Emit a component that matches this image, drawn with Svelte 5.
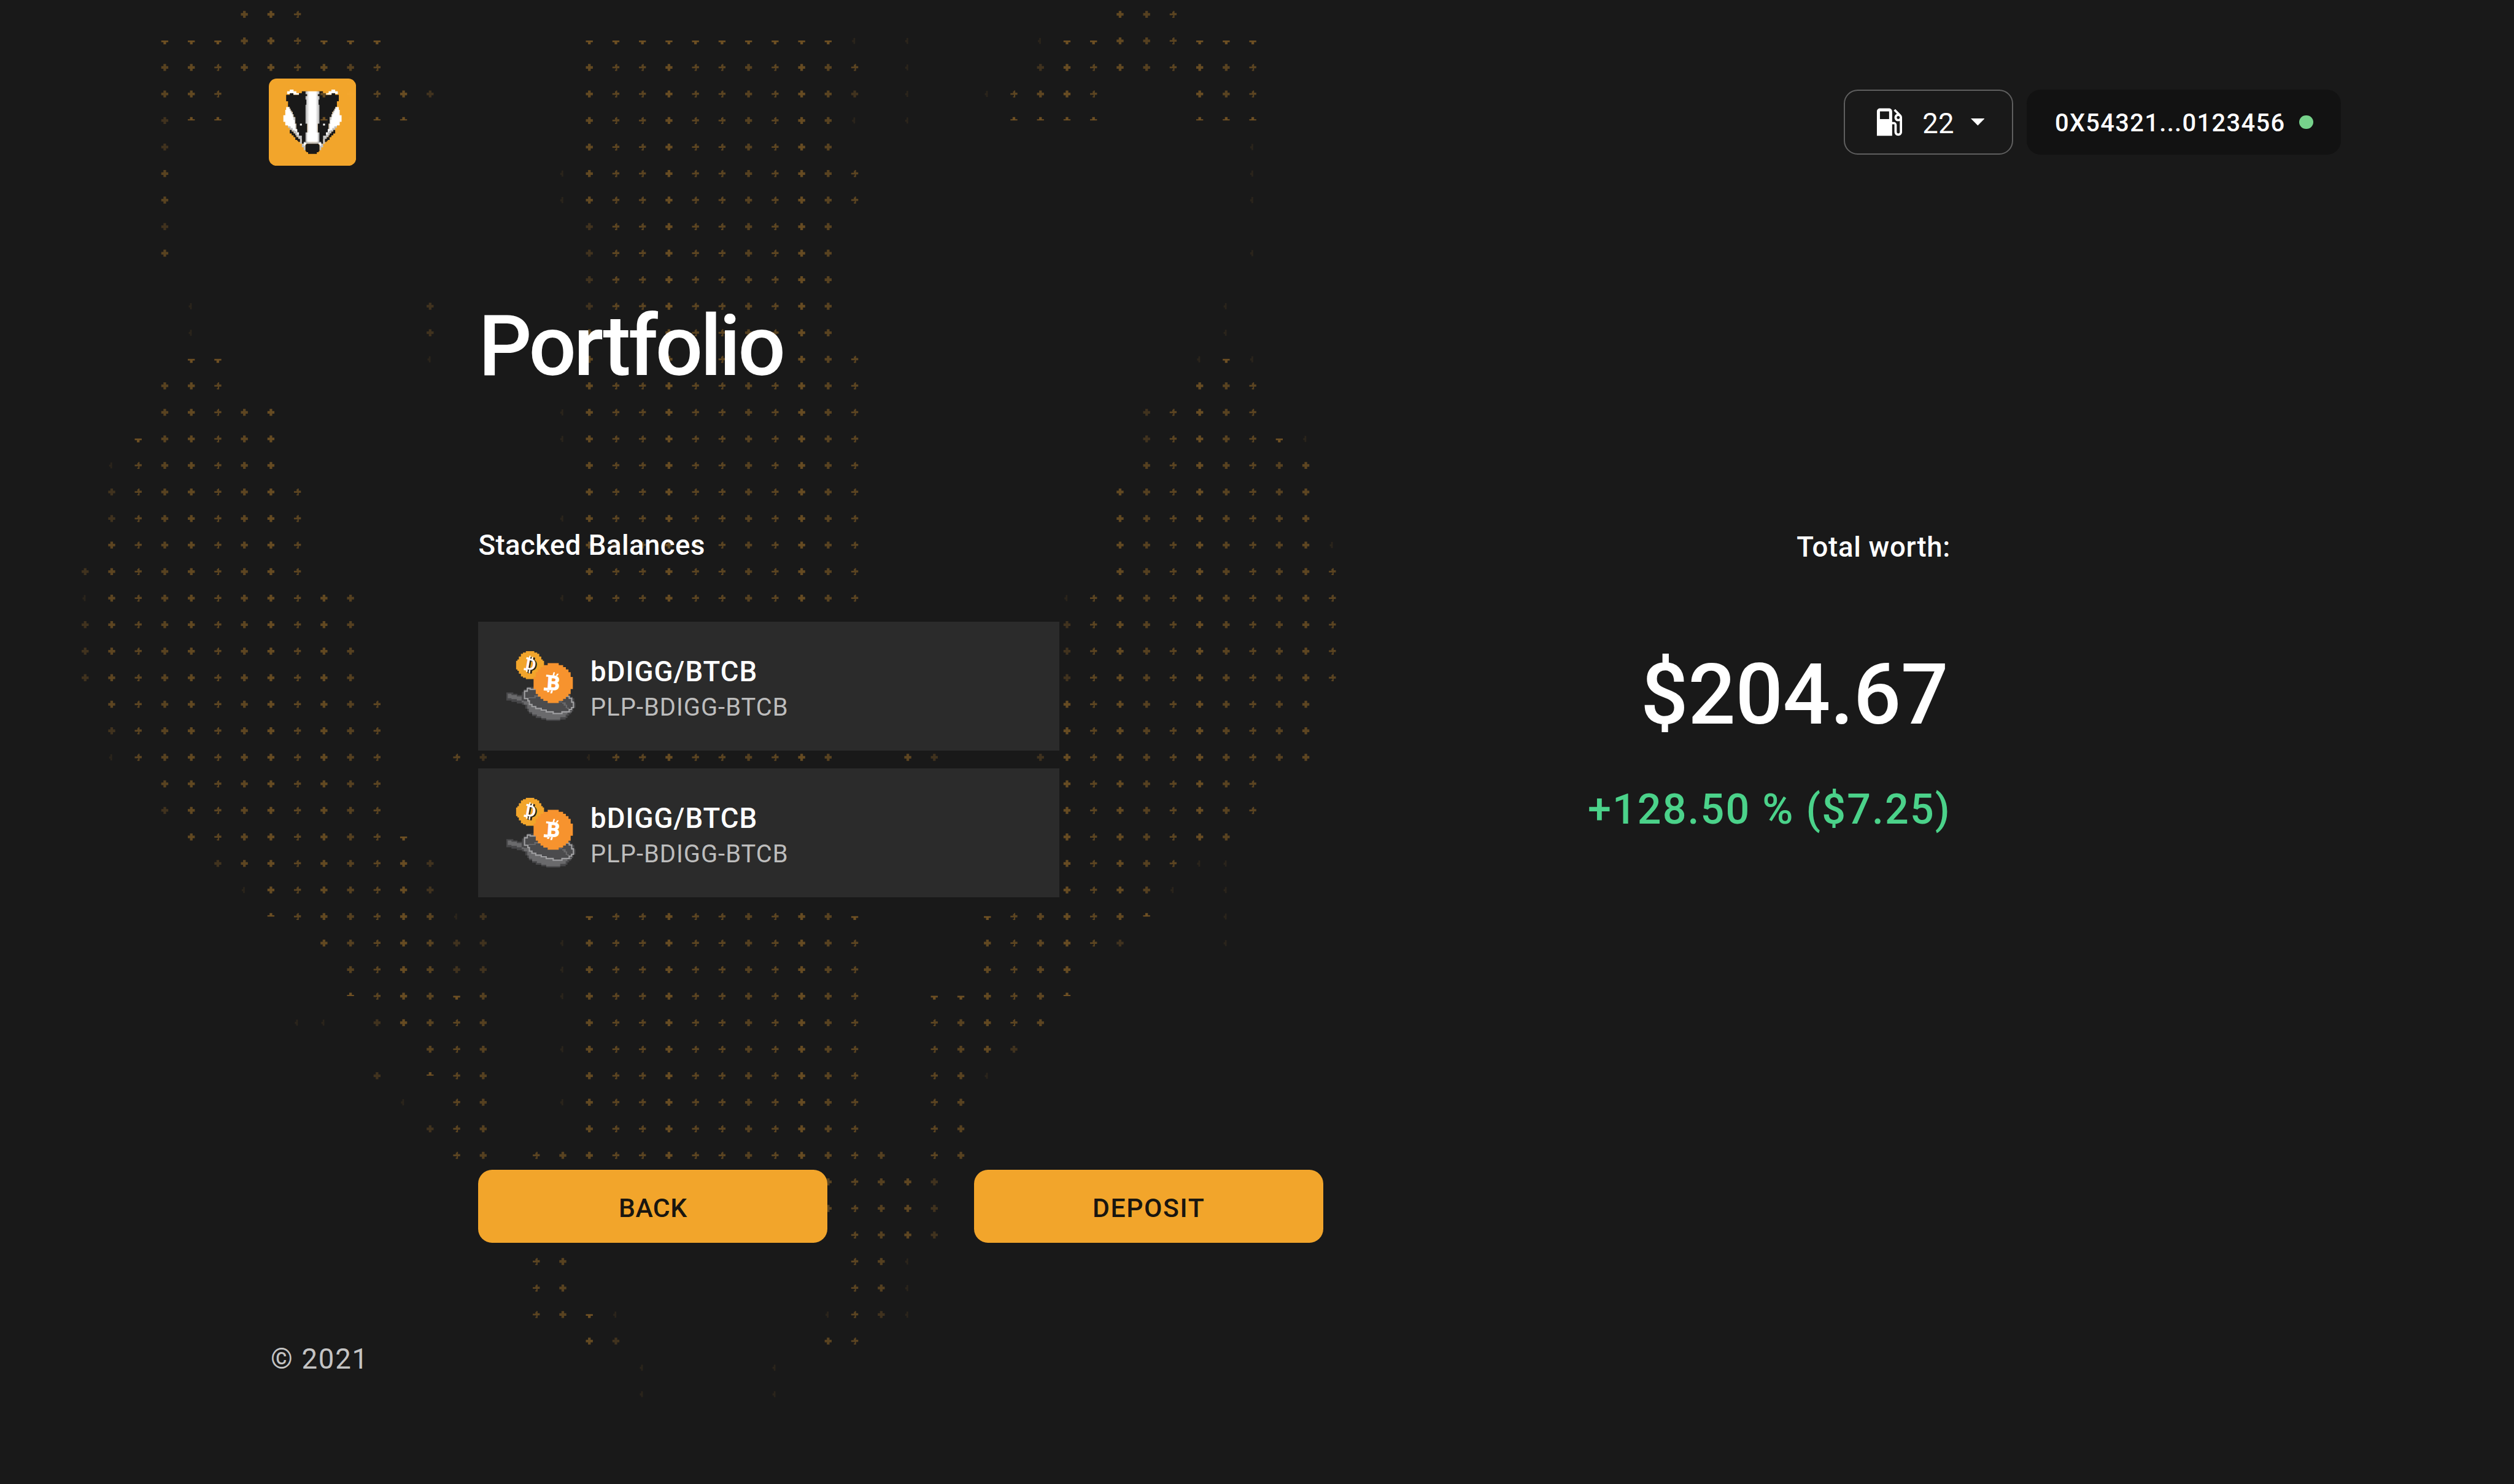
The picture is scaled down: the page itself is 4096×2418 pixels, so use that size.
<script>
  // Dot field: one entry per grid row, "a-b" is a run of columns.
  // Suffixes: d = dim, f = faint, t = lower half only, u = upper half only.
  const rows = [
    '6-8 39-41', '3-5t 6-8 9-11t 19-28t 29f 31f 36f 37-38t 39-41 42-44t', '3-11 19-29 31f 36d 37-44',
    '3-5 9-12 13d 19-28 29d 31f 34f 35-38 42-44', '3d 4-5u 9-12u 19-28 29f 31f 35-38u 42-44u', '3d 19-28 44f',
    '3 18f 19-29 44f', '3 18f 19-29 44f', '3d 19d 20-28', '3 19d 20-28 44f', '19d 20-28', '4f 13d 19d 20-28 43f',
    '4f 13d 19-28 43f', '4-5t 13f 19-29 42f 43t 44f', '3-5 19-29 42-44', '3-7 18f 19-29 40d 41-44',
    '2t 3-7 18f 19-29 40d 41-44 45t 46f', '1f 2-7 19-29 40-46', '1d 2-8 19-29 39-46', '1d 2-8 18f 19-29 39-46',
    '1-8 19-29 39-46 47f', '0d 1-8 19-29 39-47', '0f 1-10 18f 19-29 37f 38-47', '0d 1-10 37d 38-47',
    '0d 1-10 37d 38-47', '0d 1-10 37d 38-47', '1-11 37-46', '1d 2-11 37-46', '1f 2-11 14 15d 19f 20-28 31 32d 36d 37-46',
    '3-11 37-44', '3d 4-11 37-44', '4-11 12t 37-43', '5d 6-12 13d 37-41 42-43f', '6f 7-12 13d 37-40 41f 43f',
    '7u 8-13 14f 15d 19t 20-28 29t 34t 35-39 40u 43f', '9-13 14-15d 18f 19-29 34-38 39d 43f',
    '10-13 14-15d 18f 19-29 34-37', '10u 11-13 14t 15 18f 19-29 32-33t 34-36 37u', '8-9f 11d 12-15 19-29 32-36',
    '13-15 18f 19-29 32-34 35d', '11d 13u 14-15 19-29 32-33 34f', '12f 14-15 18f 19-29 32-33', '13d 14-15 19-29 32-33',
    '14-15 17-30 32-33', '28-31 32d', '28-31 32d', '29-31 32d', '17-18 29-30 31f', '17-18 29-30 31f',
    '17-18 19t 20f 28f 29 30d 31f', '19 20d 28-29', '21f 26f', '21f 26f'
  ];
  const shapes = {
    '': 'M-3-8h6v5h5v6h-5v5h-6v-5h-5v-6h5z',
    n: 'M-2-6h2v-2h3v5h5v5h-5v6h-5v-3h2v-3h-8v-4h6z',
    d: 'M-3-8h6v5h5v6h-5v5h-6v-5h-5v-6h5z',
    f: 'M-3-7h4v14h-4v-4h-3v-5h3z',
    t: 'M-8-1h16v4h-5v5h-6v-5h-5z',
    u: 'M-3-8h6v5h5v3h-16v-3h5z'
  };
  const opacity = { d: 0.18, f: 0.08, t: 0.38, u: 0.38, n: 0.3 };
  const dots = rows.flatMap((row, r) =>
    row.split(' ').flatMap((run) => {
      const [, a, b, kind] = run.match(/(\d+)(?:-(\d+))?([dftu]?)/);
      const out = [];
      for (let c = +a; c <= +(b ?? a); c++) {
        const k = kind || (c % 3 === 2 || c === 21 || c === 24 ? 'n' : '');
        out.push({ x: 195.1 + 60.8 * c, y: 32.9 + 60.8 * r, k, o: opacity[k] ?? 0.27 + ((c * 7 + r * 5) % 5) * 0.02 });
      }
      return out;
    })
  );

  // Disc with stair-stepped edges; steps are [offset from top, half width].
  function disc(cx, top, h, steps) {
    const right = [], left = [];
    steps.forEach(([y, w], i) => {
      if (i) right.push([cx + steps[i - 1][1], top + y]);
      right.push([cx + w, top + y]);
    });
    const lower = right.map(([x, y]) => [x, 2 * top + h - y]).reverse();
    const side = [...right, ...lower];
    for (const [x, y] of [...side].reverse()) left.push([2 * cx - x, y]);
    return [...side, ...left].map((p) => p.join(',')).join(' ');
  }
  const smallCoin = disc(193, 36, 192, [[0, 29], [9, 49], [18, 63], [37, 77], [57, 87], [66, 96]]);
  const bigCoin = disc(352, 118, 274, [[0, 38], [14, 68], [28, 87], [44, 105], [62, 120], [95, 135]]);

  const balances = [
    { pair: 'bDIGG/BTCB', token: 'PLP-BDIGG-BTCB' },
    { pair: 'bDIGG/BTCB', token: 'PLP-BDIGG-BTCB' }
  ];
</script>

<div class="page">
  <header>
    <svg class="logo" viewBox="78 60 600 600">
      <rect x="78" y="60" width="600" height="600" rx="54" fill="#f2a52b" />
      <defs>
        <linearGradient id="stripe">
          <stop offset="0" stop-color="#a9a9a9" /><stop offset=".12" stop-color="#d5d5d5" />
          <stop offset=".28" stop-color="#fff" /><stop offset=".72" stop-color="#fff" />
          <stop offset=".88" stop-color="#d5d5d5" /><stop offset="1" stop-color="#a9a9a9" />
        </linearGradient>
        <g id="half">
          <path fill="#191919" d="M197 172H222V160H247V172H285V160H305V148H342V508H305V478H292V452H273V420H267V370H260V325H248V305H242V288H235V280H228V268H222V255H210V216H197z" />
          <path fill="#fff" d="M204 148H222V136H248V148H267V160H285V171H247V160H222V167H204z" />
          <path fill="#c2c2c2" d="M210 256H222V268H228V280H235V290H242V306H248V325H260V370H267V408H273V430H285V452H305V508H292V482H280V463H267V450H260V438H248V425H235V413H222V400H210V382H197z" />
          <path fill="#fff" d="M197 256H216V268H222V280H228V294H235V306H242V325H248V345H255V372H260V408H273V430H267V420H255V413H242V400H228V388H210V382H191V357H178V312H191V275H197z" />
          <path fill="#fff" d="M273 430H285V445H273z" />
          <path fill="#191919" d="M222 413H235V425H248V438H260V450H267V463H280V475H292V496H280V488H273V482H260V463H248V450H235V438H222z" />
          <path fill="#c2c2c2" d="M305 508H318V496H378V508H330V552H318V533H305z" />
          <path fill="#fff" d="M318 502H336V510H330V521H318zM292 370H305V383H292z" />
        </g>
      </defs>
      <use href="#half" /><use href="#half" transform="translate(756)scale(-1 1)" />
      <path fill="url(#stripe)" d="M330 148H426V168H414V180H426V205H420V240H426V370H414V430H426V496H330V430H342V370H330V240H336V205H330V180H342V168H330z" />
      <path fill="#fff" d="M342 432H414V494H342z" />
      <path fill="#191919" d="M336 508H420V515H426V560H420V566H408V578H348V566H336V560H330V515H336z" />
    </svg>
    <div class="status">
      <button class="gas">
        <svg class="pump" viewBox="0 0 24 24"><path fill="#fff" d="M19.77 7.23l.01-.01-3.72-3.72L15 4.56l2.11 2.11c-.94.36-1.61 1.26-1.61 2.33 0 1.38 1.12 2.5 2.5 2.5.36 0 .69-.08 1-.21v7.21c0 .55-.45 1-1 1s-1-.45-1-1V14c0-1.1-.9-2-2-2h-1V5c0-1.1-.9-2-2-2H6c-1.1 0-2 .9-2 2v16h10v-7.5h1.5v5c0 1.38 1.12 2.5 2.5 2.5s2.5-1.12 2.5-2.5V9c0-.69-.28-1.32-.73-1.77zM12 10H6V5h6v5zm6 0c-.55 0-1-.45-1-1s.45-1 1-1 1 .45 1 1-.45 1-1 1z" /></svg>
        <span>22</span>
        <svg class="caret" viewBox="0 0 32 16"><path fill="#fff" d="M0 0h32L16 16z" /></svg>
      </button>
      <button class="wallet"><span>0X54321...0123456</span><i></i></button>
    </div>
  </header>

  <svg class="dots" viewBox="0 0 5760 3400">
    {#each dots as d}
      <path d={shapes[d.k]} transform="translate({d.x} {d.y})" fill="#f6a935" fill-opacity={d.o} />
    {/each}
  </svg>

  <main>
    <h1>Portfolio</h1>
    <div class="columns">
      <section class="balances">
        <h2>Stacked Balances</h2>
        <div class="cards">
          {#each balances as b}
            <article>
              <svg class="coins" viewBox="30 36 480 480">
                <path fill="#474749" d="M30 320H78V329H106V338H137V315H150V298H174V282H230V340H458V325H470V350H487V360H497V388H505V425H490V450H475V468H462V480H450V496H438V506H400V515H304V506H270V496H232V482H207V465H185V450H174V432H160V404H137V396H102V385H65V376H30z" />
                <path fill="#6a6a6c" d="M40 329H65V338H102V347H135V376H150V380H185V404H207V420H232V432H270V446H304V458H352V470H412V458H462V445H480V458H450V472H438V490H400V506H304V496H270V484H240V472H207V455H185V432H174V404H150V388H135V376H102V366H65V360H40z" />
                <path fill="#4b4b4d" d="M160 310H180V300H460V355H475V390H487V425H462V448H412V452H300V436H270V424H232V410H207V395H190V375H160z" />
                <path fill="#68686a" d="M184 352H222V340H264V350H232V360H184zM390 380H414V388H438V404H448V424H460V434H448V428H438V410H424V398H414V388H390z" />
                <path fill="none" stroke="#a0a0a2" stroke-width="9" d="M232 298H194V292H174V311H155V362H178V378H188V402H206V417H232V430H270V441H304V453H352V465H412V453H462V437H478V424H491V387H479V360H462V347H438" />
                <polygon points={smallCoin} fill="#f2a52b" />
                <g class="letter d" transform="translate(198 129)rotate(10)">
                  <g fill="#191919" stroke="#191919" stroke-width="3" transform="translate(9 3)"><text y="36">D</text><path d="M-18-54h8v14h-8zM2-54h8v14h-8zM-20 38h8v18h-8zM-2 38h8v18h-8z" /></g>
                  <text y="36">D</text><path d="M-20-60h9v22h-9zM-2-54h9v16h-9zM-24 36h9v18h-9zM-6 36h9v22h-9zM-38-46h20v14h-20zM-42 30h22v15h-22z" />
                </g>
                <polygon points={bigCoin} fill="#f7932e" />
                <g class="letter b" transform="translate(354 255)rotate(4)">
                  <text y="48" stroke="#fff" stroke-width="4">B</text><path d="M-5-74h10l-4 22h-11zM20-66h12l-9 16h-11zM-36 52h14l-5 14h-14zM-14 52h14l-5 20h-12zM-54-54h24v14h-24zM-64 36h28v20h-28z" />
                </g>
              </svg>
              <div class="names"><strong>{b.pair}</strong><span>{b.token}</span></div>
            </article>
          {/each}
        </div>
      </section>
      <section class="worth">
        <p class="label">Total worth:</p>
        <p class="total">$204.67</p>
        <p class="change">+128.50 % ($7.25)</p>
      </section>
    </div>
    <div class="actions"><button class="back">BACK</button><button class="deposit">DEPOSIT</button></div>
  </main>
  <footer>© 2021</footer>
</div>

<style>
  /* 1rem is one hundred units of the 5760-unit wide canvas */
  :global(html) { font-size: calc(100vw / 57.6); }
  :global(body) { margin: 0; background: #191919; }
  .page { position: relative; box-sizing: border-box; height: 34rem; overflow: hidden; background: #191919; color: #fff; font-family: Roboto, sans-serif; font-weight: 500; }
  header { display: flex; align-items: center; justify-content: space-between; padding: 1.8rem 3.96rem 0 6.16rem; }
  .logo { width: 2rem; height: 2rem; display: block; }
  .dots { position: absolute; inset: 0; width: 100%; height: 34rem; pointer-events: none; }
  .status { display: flex; gap: .32rem; }
  button { box-sizing: border-box; border: 0; border-radius: .32rem; font-family: inherit; font-weight: 500; color: #fff; padding: 0; }
  .gas { display: flex; align-items: center; width: 3.88rem; height: 1.48rem; border: .04rem solid #5f5f5f; background: #191919; padding-left: .6rem; font-size: .64rem; font-weight: 400; }
  .pump { width: .84rem; height: .84rem; margin-right: .32rem; }
  .gas span { line-height: .64rem; width: .76rem; padding-top: .08rem; }
  .caret { width: .32rem; height: .16rem; margin-left: .36rem; }
  .wallet { display: flex; align-items: center; justify-content: space-between; width: 7.2rem; height: 1.48rem; background: #121212; padding: 0 .64rem; font-size: .56rem; line-height: .56rem; letter-spacing: .019rem; }
  .wallet span { padding-top: .06rem; }
  .wallet i { width: .32rem; height: .32rem; border-radius: 50%; background: #76d28b; }
  main { position: relative; padding: 3.18rem 12.96rem 0 10.96rem; }
  h1, h2, p { margin: 0; font-weight: 500; }
  h1 { font-size: 1.92rem; line-height: 1.92rem; letter-spacing: -.058rem; }
  .columns { display: flex; justify-content: space-between; margin-top: 3.28rem; }
  .balances { width: 13.31rem; }
  h2 { font-size: .64rem; line-height: .64rem; letter-spacing: .0067rem; }
  .cards { display: grid; gap: .4rem; margin-top: 1.42rem; }
  article { box-sizing: border-box; height: 2.96rem; display: flex; align-items: center; gap: .33rem; padding-left: .64rem; background: #2b2b2b; }
  .coins { width: 1.6rem; height: 1.6rem; }
  .letter { fill: #fff; font-family: Roboto, sans-serif; font-weight: 700; text-anchor: middle; }
  .d { font-size: 108px; }
  .b { font-size: 138px; }
  .names { display: grid; padding-top: .17rem; }
  .names strong { font-size: .64rem; line-height: .83rem; font-weight: 500; letter-spacing: .015rem; }
  .names span { font-size: .56rem; line-height: .82rem; font-weight: 400; letter-spacing: .0146rem; color: #bdbdbd; }
  .worth { text-align: right; padding-top: .04rem; }
  .label { font-size: .64rem; line-height: .64rem; letter-spacing: .01rem; margin-right: -.05rem; }
  .total { font-size: 1.92rem; line-height: 1.92rem; margin-top: 2.1rem; letter-spacing: -.004rem; }
  .change { font-size: .96rem; line-height: .96rem; margin: 1.19rem -.06rem 0 0; letter-spacing: .029rem; color: #4bd28a; }
  .actions { display: flex; gap: 3.36rem; margin-top: 6.24rem; }
  .actions button { width: 8rem; height: 1.68rem; padding-top: .07rem; background: #f2a52b; color: #191610; font-size: .6rem; line-height: .6rem; letter-spacing: .007rem; }
  .actions .deposit { letter-spacing: .023rem; }
  footer { position: relative; margin-top: 2.34rem; padding-left: 6.2rem; font-size: .64rem; line-height: .64rem; font-weight: 400; letter-spacing: .025rem; color: #c4c4c4; }
</style>
